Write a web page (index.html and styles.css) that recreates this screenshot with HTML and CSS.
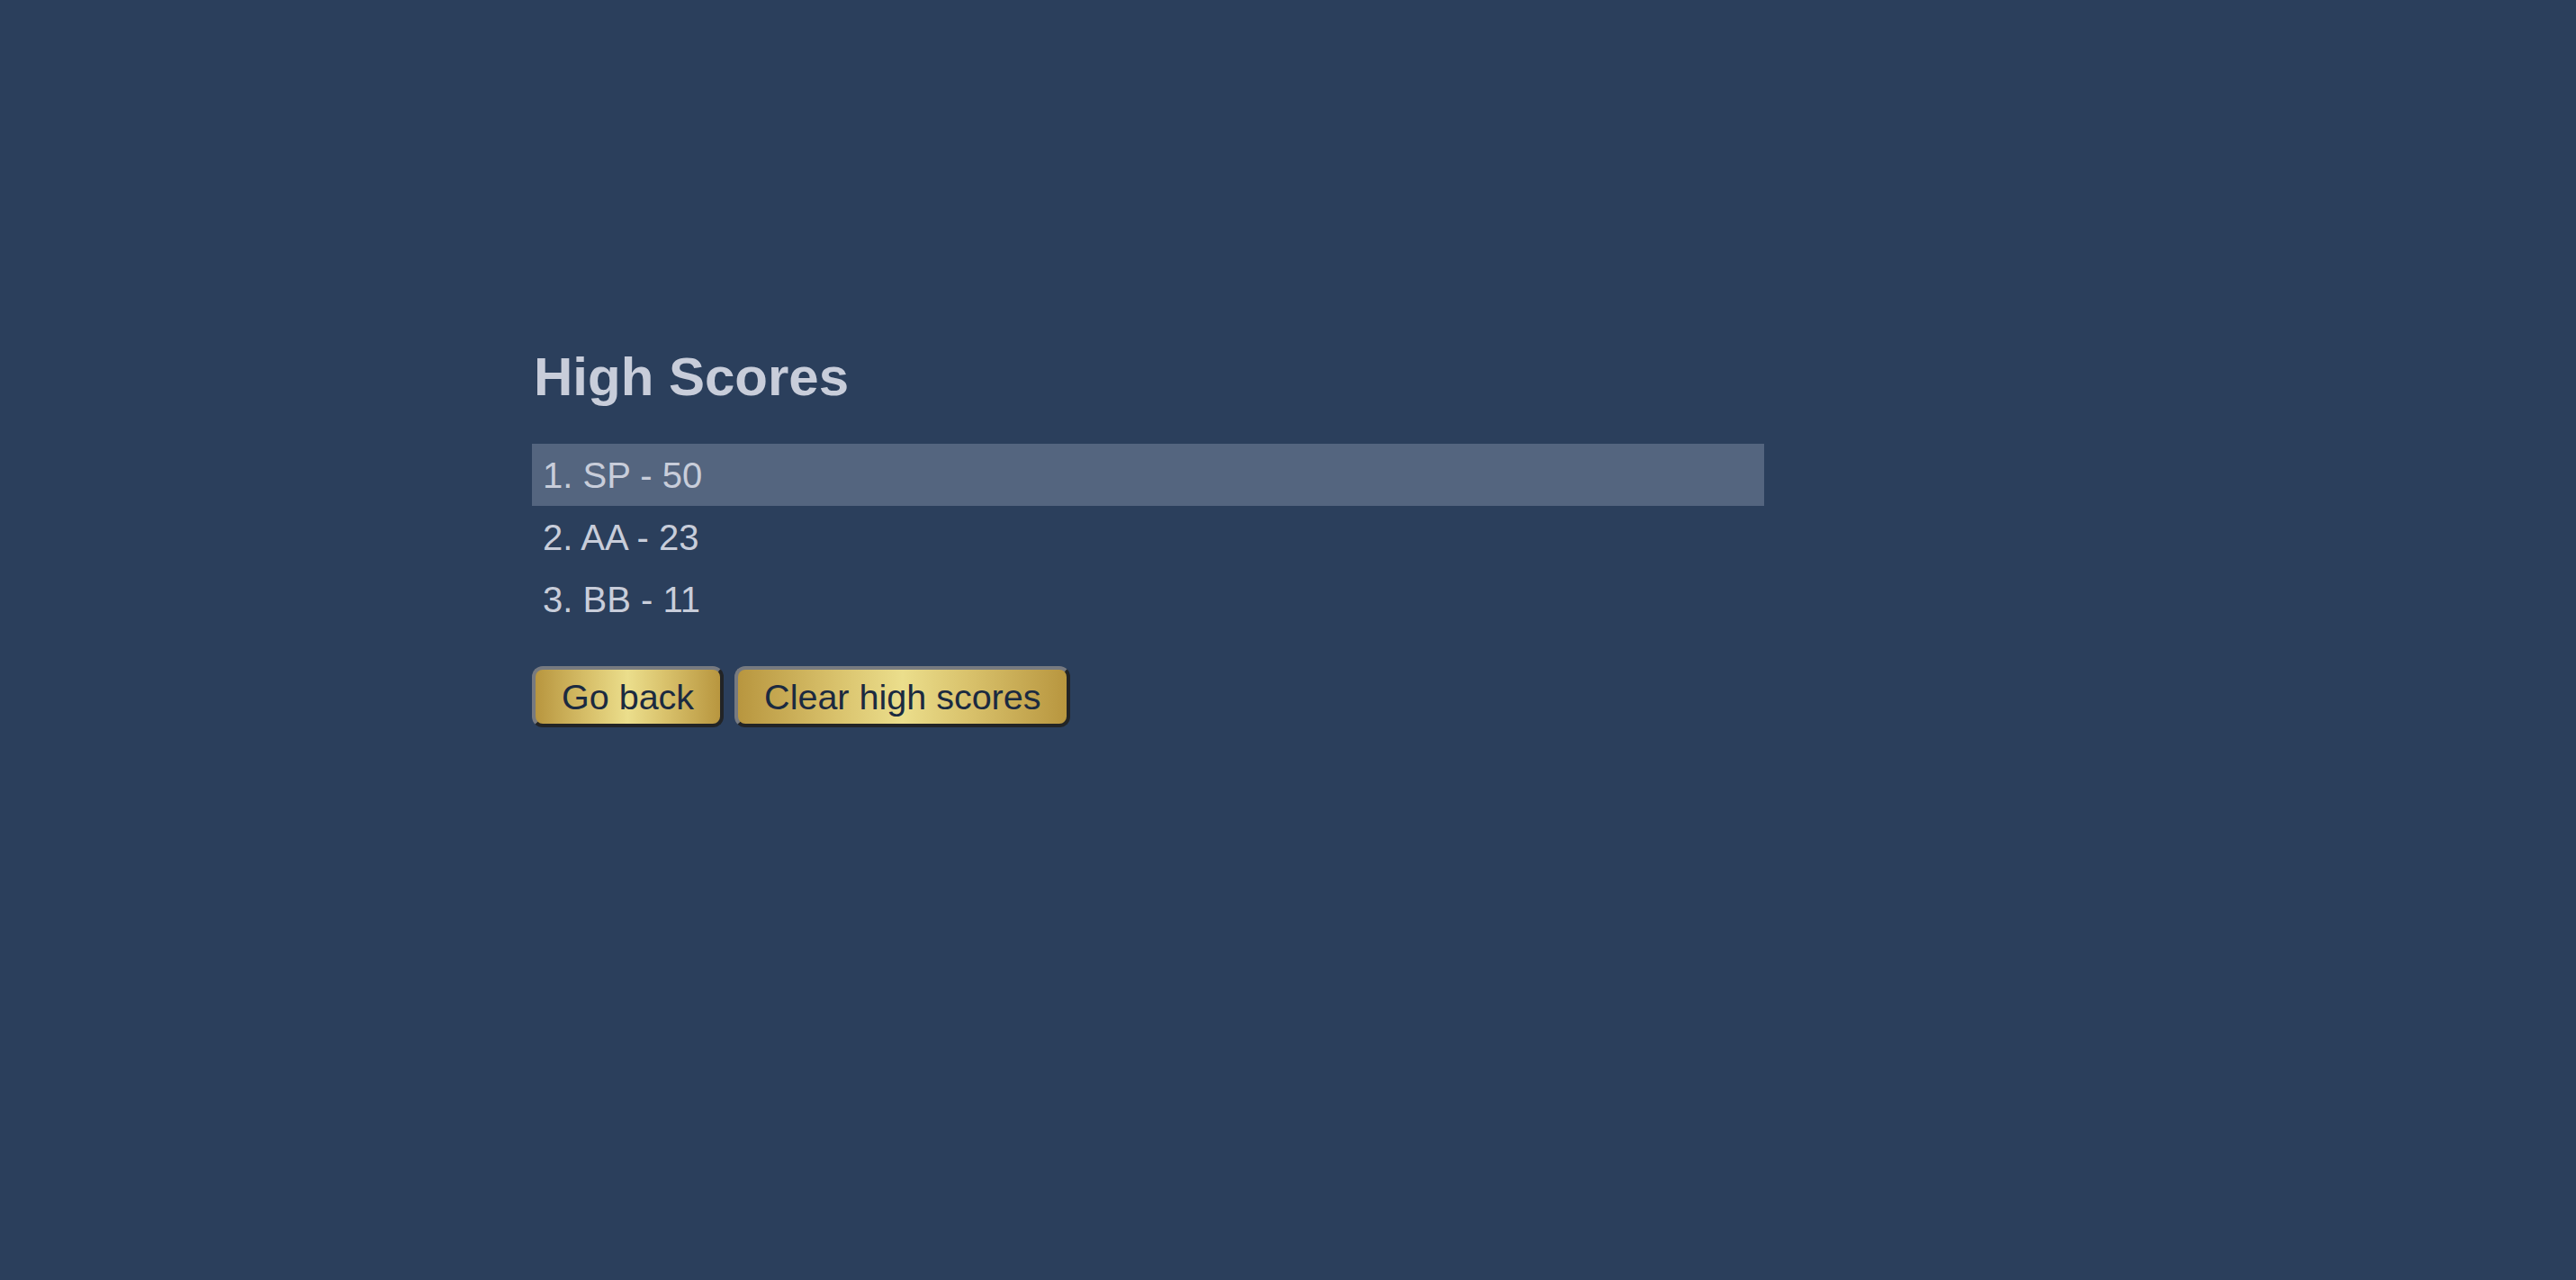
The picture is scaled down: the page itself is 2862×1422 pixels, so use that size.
FILE: index.html
```html
<!DOCTYPE html>
<html lang="en">
<head>
<meta charset="utf-8">
<title>High Scores</title>
<link rel="stylesheet" href="styles.css">
</head>
<body>
<main class="page">
  <section class="scores">
    <h2 class="scores-title">High Scores</h2>
    <ol class="score-list">
      <li class="score-item score-item--top">1. SP - 50</li>
      <li class="score-item">2. AA - 23</li>
      <li class="score-item">3. BB - 11</li>
    </ol>
    <div class="actions">
      <button class="btn" type="button">Go back</button>
      <button class="btn" type="button">Clear high scores</button>
    </div>
  </section>
</main>
</body>
</html>
```
FILE: styles.css
```css
html, body {
  margin: 0;
  padding: 0;
  height: 100%;
  background: #2b3f5c;
}

body {
  font-family: "Liberation Sans", Arial, Helvetica, sans-serif;
  color: #c8cdda;
  font-size: 40px;
}

.page {
  padding: 384px 0 0 591px;
}

.scores {
  width: 1369px;
}

.scores-title {
  margin: 0 0 40px 2px;
  font-size: 60px;
  line-height: 69px;
  font-weight: bold;
  color: #c8cdda;
}

.score-list {
  list-style: none;
  margin: 0;
  padding: 0;
}

.score-item {
  padding: 11.5px 12px;
  line-height: 46px;
  font-size: 40px;
}

.score-item--top {
  background: #54657f;
}

.actions {
  display: flex;
  gap: 12px;
  margin-top: 40px;
}

.btn {
  font-family: "Liberation Sans", Arial, Helvetica, sans-serif;
  font-size: 39.5px;
  line-height: 46px;
  padding: 7px 29px;
  color: #1b2a40;
  border-width: 4px;
  border-style: solid;
  border-color: #777a80 #222426 #222426 #777a80;
  border-radius: 12px;
  background: linear-gradient(to right, #b8963f 0%, #d9c26c 30%, #ebde8c 50%, #d9c26c 70%, #b8963f 100%);
  cursor: pointer;
}
```
